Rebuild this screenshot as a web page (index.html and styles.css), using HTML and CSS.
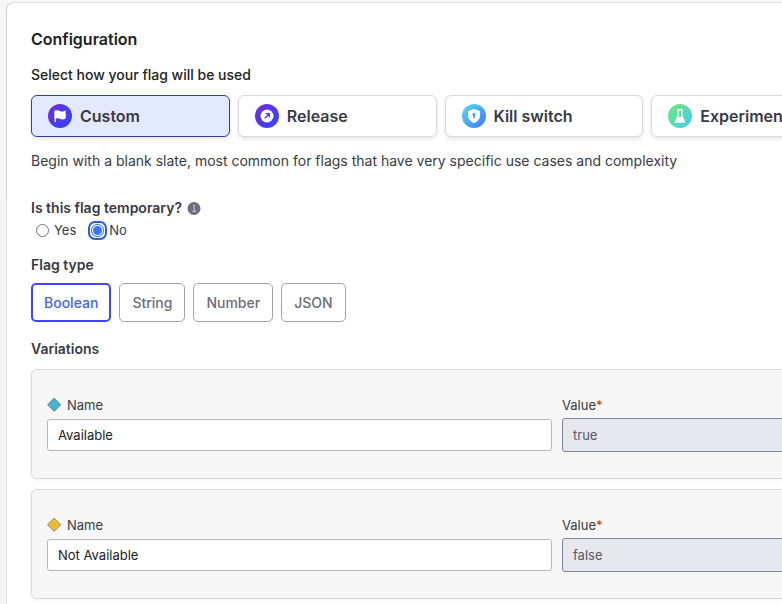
FILE: index.html
```html
<!DOCTYPE html>
<html lang="en">
<head>
<meta charset="utf-8">
<title>Create flag</title>
<link rel="stylesheet" href="styles.css">
</head>
<body>
<svg class="defs" width="0" height="0" aria-hidden="true">
  <defs>
    <linearGradient id="violet" x1="0" y1="0" x2="1" y2="1"><stop offset="0.1" stop-color="#6a30d5"/><stop offset="0.75" stop-color="#4040f5"/></linearGradient>
    <linearGradient id="blue" x1="0" y1="0" x2="1" y2="1"><stop offset="0.1" stop-color="#55d5ea"/><stop offset="0.9" stop-color="#4280fb"/></linearGradient>
    <linearGradient id="green" x1="0" y1="0" x2="1" y2="1"><stop offset="0.1" stop-color="#6ce57f"/><stop offset="0.9" stop-color="#4bccf0"/></linearGradient>
  </defs>
</svg>
<main class="panel">
  <form class="content">
    <h1>Configuration</h1>
    <h2 class="prompt">Select how your flag will be used</h2>
    <div class="templates">
      <button type="button" class="template selected" aria-pressed="true">
        <svg width="24" height="24" viewBox="0 0 24 24" aria-hidden="true"><circle cx="12" cy="12" r="12" fill="url(#violet)"/><path d="M7.200 17.600V7" stroke="#fff" stroke-width="1.300" stroke-linecap="round"/><path d="M6.600 6.800c2-1 3.600-.8 5.200.2 1.800 1 3.600.8 5.900-.4v8c-2.300 1.200-4.100 1.200-5.900.2-1.600-.9-3.200-.8-5.200.1z" fill="#fff"/></svg>
        Custom
      </button>
      <button type="button" class="template">
        <svg width="24" height="24" viewBox="0 0 24 24" aria-hidden="true"><circle cx="12" cy="12" r="12" fill="url(#violet)"/><circle cx="12" cy="12" r="6.500" fill="#fff"/><path d="M9.800 14.200l4-4M10.500 9.700h3.800v3.800" stroke="#4c39e8" stroke-width="1.300" fill="none"/></svg>
        Release
      </button>
      <button type="button" class="template">
        <svg width="24" height="24" viewBox="0 0 24 24" aria-hidden="true"><circle cx="12" cy="12" r="12" fill="url(#blue)"/><path d="M12 5l6 2.200v4.300c0 3.500-2.300 6-6 7.700-3.700-1.700-6-4.200-6-7.700V7.200z" fill="#fff"/><path d="M12 9a1.700 1.700 0 0 1 .9 3.100v2.100h-1.800v-2.100A1.700 1.700 0 0 1 12 9z" fill="#4aaaf3"/></svg>
        Kill switch
      </button>
      <button type="button" class="template">
        <svg width="24" height="24" viewBox="0 0 24 24" aria-hidden="true"><circle cx="12" cy="12" r="12" fill="url(#green)"/><path d="M9.200 5.700h5.600M10.200 6v5.500l-2.700 6.300h9l-2.700-6.300V6" fill="none" stroke="#fff" stroke-width="1.200"/><path d="M9.500 13h5l2.500 5.500H7z" fill="#fff"/></svg>
        Experiment
      </button>
    </div>
    <p class="description">Begin with a blank slate, most common for flags that have very specific use cases and complexity</p>

    <fieldset class="temporary">
      <legend>Is this flag temporary?
        <svg width="14" height="14" viewBox="0 0 14 14" aria-hidden="true"><circle cx="7" cy="7.500" r="6.500" fill="#6c6d7e"/><path d="M6 6.800h1.300v3.500M5.500 10.400h3.300" stroke="#c4c4ce" stroke-width="1.100" fill="none"/><circle cx="7" cy="4.700" r="0.900" fill="#d8d8df"/></svg>
      </legend>
      <div class="radios">
        <label><input type="radio" name="temporary">Yes</label>
        <label class="chosen"><input type="radio" name="temporary" checked>No</label>
      </div>
    </fieldset>

    <h2>Flag type</h2>
    <div class="types">
      <button type="button" class="type active" aria-pressed="true">Boolean</button>
      <button type="button" class="type">String</button>
      <button type="button" class="type">Number</button>
      <button type="button" class="type">JSON</button>
    </div>

    <h2>Variations</h2>
    <div class="variations">
      <section class="variation">
        <div class="field">
          <label for="name1"><svg width="16" height="16" viewBox="0 0 16 16" aria-hidden="true"><path d="M7.200 1l6.700 6.700-6.700 6.700L.5 7.700z" fill="#46b2cf" stroke="#7c8b91"/></svg>Name</label>
          <input id="name1" type="text" value="Available">
        </div>
        <div class="field value">
          <label for="value1">Value<span>*</span></label>
          <input id="value1" type="text" value="true" disabled>
        </div>
      </section>
      <section class="variation">
        <div class="field">
          <label for="name2"><svg width="16" height="16" viewBox="0 0 16 16" aria-hidden="true"><path d="M7.200 1l6.700 6.700-6.700 6.700L.5 7.700z" fill="#edbd39" stroke="#918b7c"/></svg>Name</label>
          <input id="name2" type="text" value="Not Available">
        </div>
        <div class="field value">
          <label for="value2">Value<span>*</span></label>
          <input id="value2" type="text" value="false" disabled>
        </div>
      </section>
    </div>
  </form>
</main>
</body>
</html>
```
FILE: styles.css
```css
* { box-sizing: border-box; }
html { background: #f7f7f7; }
body {
  margin: 0;
  padding: 2px 0 0 6px;
  overflow: hidden;
  font: 14px/20px Inter, "Liberation Sans", sans-serif;
  color: #393a44;
}
.defs { position: absolute; }
button, input { font: inherit; color: inherit; }
h1, h2, p { margin: 0; }
.panel {
  position: relative;
  min-width: 869px;
  padding: 24px;
  background: #fff;
  border: 1px solid #dfe0e2;
  border-radius: 8px;
}
.panel::before {
  content: "";
  position: absolute;
  top: -1px;
  left: -1px;
  width: 8px;
  height: 196px;
  border-left: 1px solid #d0d1d3;
  border-radius: 8px 0 0 0;
}
h1 { font-size: 16px; line-height: 24px; font-weight: 600; color: #212121; }
h2, legend { font-size: 14px; line-height: 20px; font-weight: 600; }
.prompt { margin-top: 14px; font-weight: 500; color: #212121; }
.templates { display: grid; grid-template-columns: repeat(4, 1fr); gap: 8px; margin-top: 10px; }
.template {
  display: flex;
  align-items: center;
  gap: 8px;
  height: 42px;
  padding: 0 16px;
  font-size: 16px;
  font-weight: 600;
  background: #fff;
  border: 1px solid #d8d9db;
  border-radius: 6px;
  box-shadow: 0 2px 4px #0000001a;
}
.template.selected { background: #e3e9ff; border-color: #2e3eaf; }
.description { margin-top: 14px; }
.temporary { margin: 27px 0 0; padding: 0; border: 0; }
legend { display: flex; align-items: center; gap: 5px; padding: 0; }
.radios { display: flex; gap: 12px; font-size: 13px; margin-top: 2px; }
.radios label { display: flex; align-items: center; gap: 5px; }
.radios input {
  appearance: none;
  width: 13px;
  height: 13px;
  margin: 0 0 0 5px;
  border: 1px solid #767676;
  border-radius: 50%;
  background: #fff;
}
.radios .chosen { gap: 2px; }
.radios .chosen input {
  width: 19px;
  height: 19px;
  margin: 0;
  border: 2px solid #2860d0;
  border-radius: 7px;
  background: radial-gradient(circle, #3b75f5 4px, #fff 5px, #fff 5px, #3b75f5 6px, #3b75f5 6px, #fff 7px);
}
.temporary + h2 { margin-top: 15px; }
.types { display: flex; gap: 8px; margin: 8px 0 17px; }
.type {
  height: 39px;
  padding: 0 12px;
  font-weight: 500;
  color: #6c6d7e;
  background: #fff;
  border: 1px solid #a2a3ae;
  border-radius: 5px;
}
.type.active { color: #4263f5; border: 2px solid #4145f5; padding: 0 11px; }
.variations { display: grid; gap: 10px; margin-top: 10px; }
.variation {
  display: grid;
  grid-template-columns: 505fr 272fr;
  gap: 10px;
  align-items: start;
  padding: 25px 15px 26px;
  background: #f7f7f7;
  border: 1px solid #d8dadc;
  border-radius: 6px;
  box-shadow: 0 1px 3px #1c2b4014;
}
.field { display: grid; gap: 4px; }
.field label { display: flex; align-items: center; gap: 4px; font-size: 13px; line-height: 20px; }
.field label span { color: #d12e2e; }
.field input {
  width: 100%;
  height: 32px;
  padding: 0 10px;
  font-size: 13px;
  color: #212121;
  background: #fff;
  border: 1px solid #b7b8bf;
  border-radius: 3px;
}
.value { gap: 3px; }
.value label { gap: 0; }
.value input { height: 34px; color: #585a6b; background: #e7e8ed; border-color: #82849a; }
```
